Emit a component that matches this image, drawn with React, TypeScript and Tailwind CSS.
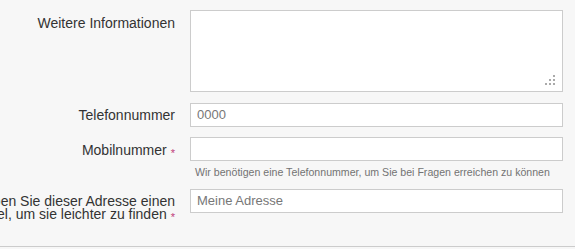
const Req = () => <span className="relative top-[2px] ml-[4px] text-[11px] text-[#c0407a]">*</span>;

const Label = ({ children }: { children: React.ReactNode }) => (
    <div className="flex justify-end pt-[7px] text-[14px] leading-[13px] text-[#333]">
        <span className="whitespace-nowrap text-right">{children}</span>
    </div>
);

const inputCls =
    "h-[24px] w-full border border-[#ccc] bg-white px-[6px] text-[13px] text-[#555] outline-none placeholder:text-[#777]";

export default function App() {
    return (
        <div className="h-[249px] w-full overflow-hidden bg-[#f7f7f7] font-['Liberation_Sans',Arial,sans-serif]">
            <div className="grid h-[247px] grid-cols-[175px_1fr] content-start gap-x-[15px] border-b border-[#ccc] pr-[12px] pt-[10px]">
                {/* Weitere Informationen */}
                <Label>Weitere Informationen</Label>
                <div className="relative">
                    <textarea className="block h-[82px] w-full resize-none border border-[#ccc] bg-white outline-none" />
                    <svg className="absolute bottom-[7px] right-[8px]" width="10" height="10" viewBox="0 0 10 10">
                        <rect x="8" y="0" width="2" height="2" fill="#aaa" />
                        <rect x="4" y="4" width="2" height="2" fill="#aaa" />
                        <rect x="8" y="4" width="2" height="2" fill="#aaa" />
                        <rect x="0" y="8" width="2" height="2" fill="#aaa" />
                        <rect x="4" y="8" width="2" height="2" fill="#aaa" />
                        <rect x="8" y="8" width="2" height="2" fill="#aaa" />
                    </svg>
                </div>

                {/* Telefon */}
                <div className="mt-[10px]">
                    <Label>Telefonnummer</Label>
                </div>
                <div className="mt-[10px]">
                    <input className={inputCls} placeholder="0000" />
                </div>

                {/* Mobil */}
                <div className="mt-[10px]">
                    <Label>
                        Mobilnummer
                        <Req />
                    </Label>
                </div>
                <div className="mt-[10px]">
                    <input className={inputCls} />
                    <p className="mt-[5px] whitespace-nowrap pl-[5px] text-[10.6px] leading-[13px] text-[#737373]">
                        Wir benötigen eine Telefonnummer, um Sie bei Fragen erreichen zu können
                    </p>
                </div>

                {/* Adresse */}
                <div className="mt-[9px]">
                    <Label>
                        Geben Sie dieser Adresse einen
                        <br />
                        Titel, um sie leichter zu finden
                        <Req />
                    </Label>
                </div>
                <div className="mt-[9px]">
                    <input className={inputCls} placeholder="Meine Adresse" />
                </div>
            </div>
        </div>
    );
}
